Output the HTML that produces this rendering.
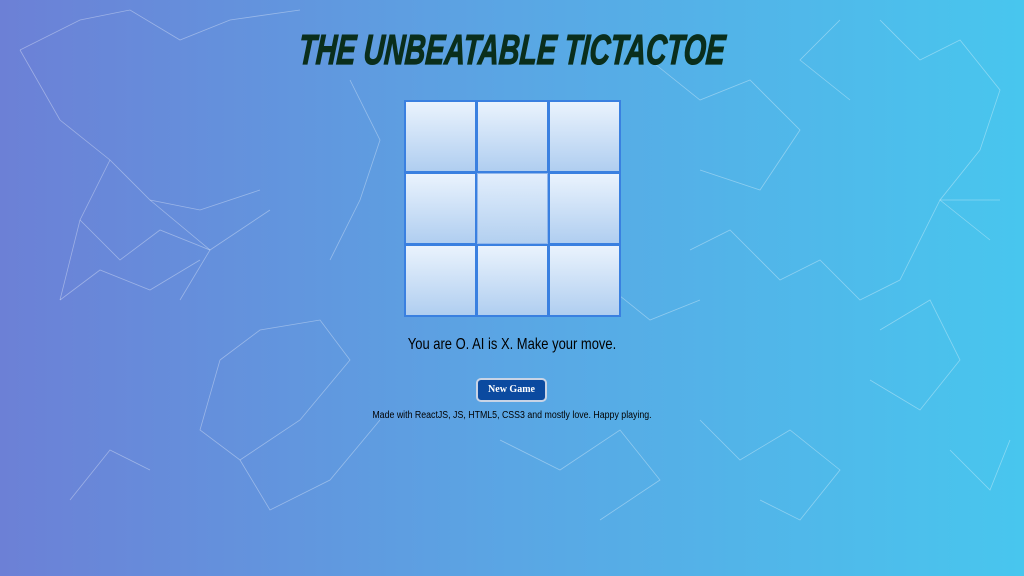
<!DOCTYPE html>
<html><head><meta charset="utf-8"><style>
html,body{margin:0;padding:0;width:1024px;height:576px;overflow:hidden}
body{background:linear-gradient(90deg,#6c80d6 0%,#5aa6e4 50%,#48c6ee 100%);position:relative;font-family:"Liberation Sans",sans-serif}
svg.bg{position:absolute;left:0;top:0}
h1{position:absolute;top:26px;left:0;width:1024px;margin:0;text-align:center;font-family:"Liberation Sans",sans-serif;font-weight:bold;font-style:italic;font-size:42px;color:#0a2e1c;letter-spacing:0px;transform:scaleX(0.68) skewX(-6deg);-webkit-text-stroke:1.2px #0a2e1c}
.grid{position:absolute;left:404px;top:100px;width:213px;height:213px;padding:2px;background:#3a80e0;display:grid;grid-template-columns:69px 69px 69px;grid-template-rows:69px 69px 69px;gap:3px}
.grid div{background:linear-gradient(180deg,#eaf3fd,#b0cef0)}
.grid div.c{outline:1px solid #8fb6ec;background:linear-gradient(180deg,#e2eefc,#b3d0f0)}
.msg{position:absolute;top:336px;width:1024px;text-align:center;font-size:16px;color:#000;transform:scaleX(0.81)}
.btn{position:absolute;left:476px;top:378px;width:71px;height:24px;box-sizing:border-box;background:#0b4aa0;border:2px solid #c9d4e6;border-radius:5px;color:#fff;font-family:"Liberation Serif",serif;font-size:10px;font-weight:bold;text-align:center;line-height:20px}
.foot{position:absolute;top:410px;width:1024px;text-align:center;font-size:10px;color:#000;transform:scaleX(0.88)}
</style></head><body>
<svg class="bg" width="1024" height="576" stroke="#ffffff" stroke-opacity="0.35" stroke-width="0.8" fill="none">
<polyline points="20,50 80,20 130,10 180,40 230,20 300,10"/>
<polyline points="20,50 60,120 110,160 150,200 200,210 260,190"/>
<polyline points="80,220 120,260 160,230 210,250 270,210"/>
<polyline points="60,300 100,270 150,290 200,260"/>
<polyline points="220,360 260,330 320,320 350,360 300,420 240,460 200,430 220,360"/>
<polyline points="240,460 270,510 330,480 380,420"/>
<polyline points="70,500 110,450 150,470"/>
<polyline points="350,80 380,140 360,200 330,260"/>
<polyline points="650,60 700,100 750,80 800,130 760,190 700,170"/>
<polyline points="690,250 730,230 780,280 820,260 860,300 900,280"/>
<polyline points="880,20 920,60 960,40 1000,90 980,150 940,200 990,240"/>
<polyline points="880,330 930,300 960,360 920,410 870,380"/>
<polyline points="700,420 740,460 790,430 840,470 800,520 760,500"/>
<polyline points="500,440 560,470 620,430 660,480 600,520"/>
<polyline points="840,20 800,60 850,100"/>
<polyline points="600,280 650,320 700,300"/>
<polyline points="950,450 990,490 1010,440"/>
<polyline points="110,160 80,220 60,300"/>
<polyline points="150,200 210,250 180,300"/>
<polyline points="900,280 940,200 1000,200"/>
</svg>
<h1>THE UNBEATABLE TICTACTOE</h1>
<div class="grid"><div></div><div></div><div></div><div></div><div class="c"></div><div></div><div></div><div></div><div></div></div>
<div class="msg">You are O. AI is X. Make your move.</div>
<div class="btn">New Game</div>
<div class="foot">Made with ReactJS, JS, HTML5, CSS3 and mostly love. Happy playing.</div>
</body></html>
